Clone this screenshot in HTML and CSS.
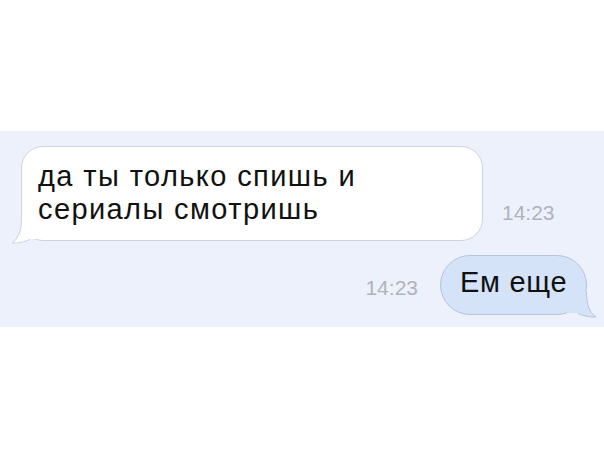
FILE: index.html
```html
<!DOCTYPE html>
<html lang="ru">
<head>
  <meta charset="UTF-8" />
  <meta name="viewport" content="width=device-width, initial-scale=1.0" />
  <title>Сообщения</title>
  <link rel="stylesheet" href="styles.css">
</head>
<body>
  <div class="chat">
    <div class="row incoming">
      <div class="bubble in">
        <p>да ты только спишь и<br>сериалы смотришь</p>
        <svg class="tail tail-left" width="30" height="30" viewBox="0 0 30 30">
          <path d="M11 4 C11 16 8 24 1 29 C8 29.5 14 27.5 19 25 L30 25 L30 4 Z" fill="#fff"/>
          <path d="M10.5 4 C10.5 16 8 24 1 29 C8 29.5 14 27.5 19 25.5" fill="none" stroke="#cfd3dc" stroke-width="1"/>
        </svg>
      </div>
      <span class="time time-in">14:23</span>
    </div>
    <div class="row outgoing">
      <span class="time time-out">14:23</span>
      <div class="bubble out">
        <p>Ем еще</p>
        <svg class="tail tail-right" width="30" height="30" viewBox="0 0 30 30">
          <path d="M19 4 C19 16 22 24 29 29 C22 29.5 16 27.5 11 25 L0 25 L0 4 Z" fill="#d5e3f8"/>
          <path d="M19.5 4 C19.5 16 22 24 29 29 C22 29.5 16 27.5 11 25.5" fill="none" stroke="#b7c3d6" stroke-width="1"/>
        </svg>
      </div>
    </div>
  </div>
</body>
</html>
```

FILE: styles.css
```css
* {
  box-sizing: border-box;
  margin: 0;
  padding: 0;
}

html, body {
  background: #ffffff;
  font-family: 'Liberation Sans', Arial, sans-serif;
  color: #111;
  overflow: hidden;
}

.chat {
  margin-top: 131px;
  height: 196px;
  background: #edf1fb;
  padding-top: 15px;
}

.row {
  display: flex;
}

.incoming {
  padding-left: 21px;
  align-items: flex-end;
}

.outgoing {
  justify-content: flex-end;
  align-items: flex-start;
  padding-right: 17px;
  margin-top: 14px;
}

.bubble {
  position: relative;
  flex-shrink: 0;
}

.bubble p {
  position: relative;
  z-index: 1;
  font-size: 29px;
  line-height: 33px;
  letter-spacing: 1.4px;
  white-space: nowrap;
}

.in {
  width: 462px;
  height: 95px;
  background: #ffffff;
  border: 1px solid #cfd3dc;
  border-radius: 22px;
  padding: 13px 16px 0;
}

.out {
  width: 147px;
  height: 60px;
  background: #d5e3f8;
  border: 1px solid #b7c3d6;
  border-radius: 30px;
  padding: 10px 0 0 19px;
}

.out p {
  letter-spacing: 0.7px;
}

.tail {
  position: absolute;
  bottom: -4px;
}

.tail-left {
  left: -11px;
}

.tail-right {
  right: -11px;
}

.time {
  font-size: 21px;
  line-height: 24px;
  color: #b0b3bc;
}

.time-in {
  margin-left: 19px;
  margin-bottom: 16px;
}

.time-out {
  margin-right: 22px;
  margin-top: 21px;
}
```
